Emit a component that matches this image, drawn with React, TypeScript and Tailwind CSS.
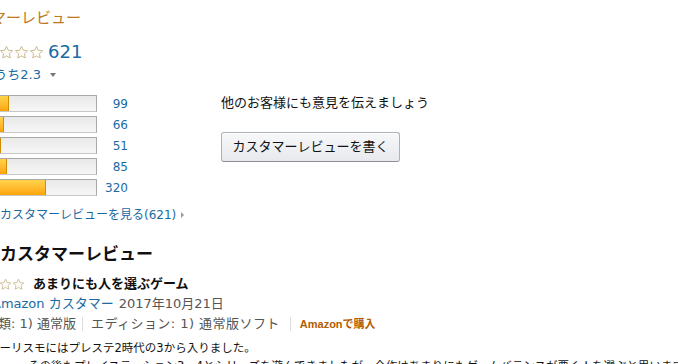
const font = "font-['DejaVu_Sans','Noto_Sans_CJK_JP',sans-serif]"

const bars = [
  { count: 99, pct: 16 },
  { count: 66, pct: 10.6 },
  { count: 51, pct: 8.2 },
  { count: 85, pct: 13.7 },
  { count: 320, pct: 51.5 },
]

function Star({ size }: { size: number }) {
  return (
    <svg width={size} height={size} viewBox="0 0 24 24" className="shrink-0">
      <path
        d="M12 2.2l2.9 6.2 6.8.8-5 4.7 1.3 6.8L12 17.4l-6 3.3 1.3-6.8-5-4.7 6.8-.8z"
        fill="#fffdf7"
        stroke="#c6b48c"
        strokeWidth="1.5"
        strokeLinejoin="round"
      />
    </svg>
  )
}

export default function App() {
  return (
    <div className={`h-[364px] w-[678px] overflow-hidden bg-white text-[#111] ${font}`}>
      <div className="flex">
        <div className="flex w-[221px] shrink-0 flex-col">
          <div className="-ml-[54px] mt-[8px] flex h-[20px] items-center whitespace-nowrap text-[15px] text-[#c0781e]">
            カスタマーレビュー
          </div>

          <div className="-ml-[31px] mt-[12px] flex h-[24px] items-center">
            {[0, 1, 2, 3, 4].map((i) => (
              <Star key={i} size={15} />
            ))}
            <span className="ml-[4px] text-[18px] leading-none text-[#1a6aa3]">621</span>
          </div>

          <div className="-ml-[53px] mt-[2px] flex h-[18px] items-center whitespace-nowrap text-[13px] text-[#1a6aa3]">
            5つ星のうち2.3
            <span className="ml-[9px] inline-block h-0 w-0 border-x-[3.5px] border-t-[4px] border-x-transparent border-t-[#777]" />
          </div>

          <div className="-ml-[8px] mt-[9px] flex flex-col">
            {bars.map((b) => (
              <div key={b.count} className="flex h-[21px] items-center">
                <div className="h-[17px] w-[105px] border border-[#a9a9a9] border-b-[#c8c8c8] bg-gradient-to-b from-[#e9e9e9] to-[#f6f6f6]">
                  <div
                    className="h-full border-r border-[#d08f00] bg-gradient-to-b from-[#ffd44a] to-[#ffa400]"
                    style={{ width: `${b.pct}%` }}
                  />
                </div>
                <span className="w-[31px] text-right text-[12px] text-[#1a6aa3]">{b.count}</span>
              </div>
            ))}
          </div>

          <div className="mt-[8px] flex h-[18px] items-center whitespace-nowrap text-[12px] text-[#1a6aa3]">
            カスタマーレビューを見る(621)
            <span className="ml-[5px] inline-block h-0 w-0 border-y-[3px] border-l-[3px] border-y-transparent border-l-[#999]" />
          </div>
        </div>

        <div className="flex flex-col pt-[94px]">
          <div className="flex h-[18px] items-center whitespace-nowrap text-[13px]">
            他のお客様にも意見を伝えましょう
          </div>
          <button className="mt-[20px] flex h-[30px] w-[179px] items-center justify-center rounded-[3px] border border-[#adb1b8] border-b-[#8d9096] bg-gradient-to-b from-[#f7f8fa] to-[#e7e9ec] text-[13px] text-[#111] shadow-[inset_0_1px_0_#ffffff]">
            カスタマーレビューを書く
          </button>
        </div>
      </div>

      <div className="mt-[19px] flex h-[24px] items-center whitespace-nowrap text-[17px] font-bold">
        カスタマーレビュー
      </div>

      <div className="mt-[7px] flex flex-col">
        <div className="-ml-[40px] flex h-[20px] items-center whitespace-nowrap">
          {[0, 1, 2, 3, 4].map((i) => (
            <Star key={i} size={13} />
          ))}
          <span className="ml-[8px] text-[13px] font-bold">あまりにも人を選ぶゲーム</span>
        </div>
        <div className="-ml-[8px] flex h-[20px] items-center whitespace-nowrap text-[13px]">
          <span className="text-[#1a6aa3]">Amazon カスタマー</span>
          <span className="ml-[5px] text-[#555]">2017年10月21日</span>
        </div>
        <div className="-ml-[15px] flex h-[20px] items-center whitespace-nowrap text-[13px] text-[#555]">
          <span>種類: 1) 通常版</span>
          <span className="ml-[6px] mr-[8px] inline-block h-[14px] w-px bg-[#dddddd]" />
          <span className="tracking-[0.035em]">エディション: 1) 通常版ソフト</span>
          <span className="ml-[10px] mr-[9px] inline-block h-[14px] w-px bg-[#dddddd]" />
          <span className="font-['Liberation_Sans','Noto_Sans_CJK_JP',sans-serif] text-[11px] font-bold text-[#b35c00]">
            Amazonで購入
          </span>
        </div>
        <div className="-ml-[12px] mt-[6px] flex h-[18px] items-center whitespace-nowrap text-[11.5px]">
          ツーリスモにはプレステ2時代の3から入りました。
        </div>
        <div className="ml-[28px] flex h-[18px] items-center whitespace-nowrap text-[11.5px]">
          その後もプレイステーション3、4とシリーズを遊んできましたが、今作はあまりにもゲームバランスが悪く人を選ぶと思います。
        </div>
      </div>
    </div>
  )
}
